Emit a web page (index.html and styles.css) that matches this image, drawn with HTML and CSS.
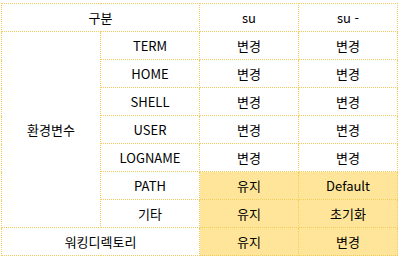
FILE: index.html
```html
<!DOCTYPE html>
<html lang="ko">
<head>
<meta charset="utf-8">
<link rel="stylesheet" href="styles.css">
</head>
<body>
<table class="grid">
  <colgroup><col class="c"><col class="c"><col class="c"><col class="c"></colgroup>
  <tr><td colspan="2">구분</td><td>su</td><td>su -</td></tr>
  <tr><td rowspan="7">환경변수</td><td>TERM</td><td>변경</td><td>변경</td></tr>
  <tr><td>HOME</td><td>변경</td><td>변경</td></tr>
  <tr><td>SHELL</td><td>변경</td><td>변경</td></tr>
  <tr><td>USER</td><td>변경</td><td>변경</td></tr>
  <tr><td>LOGNAME</td><td>변경</td><td>변경</td></tr>
  <tr><td>PATH</td><td class="hl">유지</td><td class="hl">Default</td></tr>
  <tr><td>기타</td><td class="hl">유지</td><td class="hl">초기화</td></tr>
  <tr><td colspan="2">워킹디렉토리</td><td class="hl">유지</td><td class="hl">변경</td></tr>
</table>
</body>
</html>
```
FILE: styles.css
```css
html, body {
  margin: 0;
  padding: 0;
  background: #ffffff;
}
body {
  padding: 3px 0 0 1px;
  font-family: "Noto Sans CJK KR", "Noto Sans", sans-serif;
  font-size: 13px;
  color: #000000;
}
.grid {
  border-collapse: collapse;
  table-layout: fixed;
  width: 397px;
}
.grid .c {
  width: 99px;
}
.grid td {
  border: 1px dotted #f3cd5c;
  height: 27px;
  padding: 0;
  text-align: center;
  vertical-align: middle;
  line-height: 16px;
}
.grid td.hl {
  background: #ffe599;
}
```
